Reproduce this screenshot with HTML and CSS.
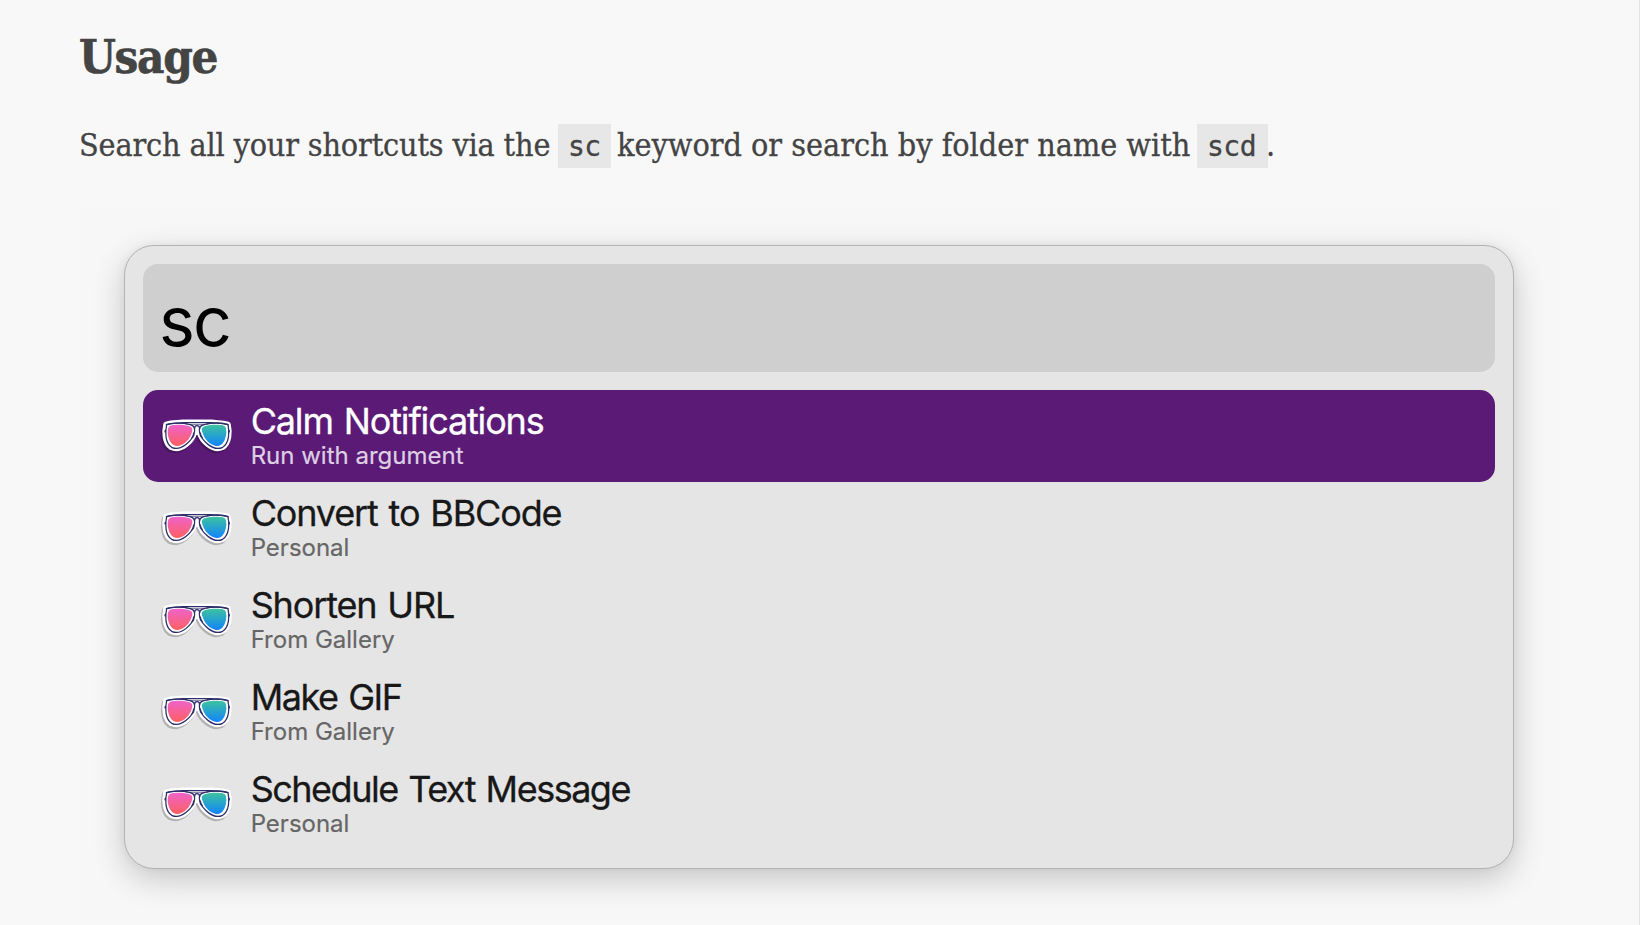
FILE: index.html
```html
<!DOCTYPE html>
<html lang="en">
<head>
<meta charset="utf-8">
<title>Usage</title>
<link rel="stylesheet" href="styles.css">
</head>
<body>
<svg class="defs" width="0" height="0" aria-hidden="true">
  <defs>
    <linearGradient id="pink" x1="0" y1="0" x2="0" y2="1"><stop offset="0" stop-color="#ee63c8"/><stop offset="1" stop-color="#ff5f62"/></linearGradient>
    <linearGradient id="blue" x1="0" y1="0" x2="0" y2="1"><stop offset="0" stop-color="#3cc2a0"/><stop offset="1" stop-color="#1283fb"/></linearGradient>
    <g id="sticker" stroke-width="19" stroke-linejoin="round">
      <path d="M49 83C44 105 45 137 64 150C94 164 126 129 132 107L141 101L150 107C156 129 189 164 217 150C237 137 238 105 233 83C216 78 198 80 183 77H99C84 80 68 77 49 83Z"/>
    </g>
    <symbol id="glasses" viewBox="27 60 221 114">
      <use href="#sticker" class="sticker-shadow" transform="translate(-4 6)"/>
      <use href="#sticker" fill="#fff" stroke="#fff"/>
      <g fill="none" stroke="#2c2d69" stroke-width="3.8" stroke-linecap="round" stroke-linejoin="round">
        <path d="M49 83C68 77 84 80 99 77H183C198 80 216 77 234 83"/>
        <path d="M104 80Q112 84 124 83H158Q172 84 179 80" stroke-width="2"/>
        <path d="M50 83C45 105 45 138 65 151C94 165 127 130 133 107C138 86 124 81 99 79C79 77 62 78 50 83Z"/>
        <path d="M234 83C239 105 238 138 218 151C189 165 155 130 149 107C144 86 158 81 183 79C203 77 221 78 234 83Z"/>
        <path d="M134 94Q134 86 141 86Q148 86 149 94"/>
        <path stroke-width="5" d="M131 109Q132 116 127 121M151 109Q150 116 156 121M46 101V104M237 101V104"/>
      </g>
      <path fill="url(#pink)" d="M60 87C75 82 99 83 116 87C128 90 129 97 125 108C120 126 104 143 85 147C67 150 54 128 53 107C53 97 55 89 60 87Z"/>
      <path fill="url(#blue)" d="M223 87C208 82 183 83 166 87C154 90 154 97 158 108C163 126 179 143 198 147C216 150 228 128 229 107C229 97 228 89 223 87Z"/>
    </symbol>
  </defs>
</svg>
<main class="page">
  <h2 class="heading">Usage</h2>
  <p class="intro"><span class="lead">Search all your shortcuts via the</span><code class="code">sc</code><span class="middle">keyword or search by folder name with</span><code class="code code-last">scd</code><span class="stop">.</span></p>
  <section class="shot">
    <div class="panel">
      <div class="search">sc</div>
      <ul class="results">
        <li class="row selected"><svg class="icon"><use href="#glasses"/></svg><div class="label"><span class="title">Calm Notifications</span><span class="sub">Run with argument</span></div></li>
        <li class="row"><svg class="icon"><use href="#glasses"/></svg><div class="label"><span class="title">Convert to BBCode</span><span class="sub">Personal</span></div></li>
        <li class="row"><svg class="icon"><use href="#glasses"/></svg><div class="label"><span class="title">Shorten URL</span><span class="sub">From Gallery</span></div></li>
        <li class="row"><svg class="icon"><use href="#glasses"/></svg><div class="label"><span class="title title-short">Make GIF</span><span class="sub">From Gallery</span></div></li>
        <li class="row"><svg class="icon"><use href="#glasses"/></svg><div class="label"><span class="title title-long">Schedule Text Message</span><span class="sub">Personal</span></div></li>
      </ul>
    </div>
  </section>
</main>
</body>
</html>
```
FILE: styles.css
```css
* { box-sizing: border-box; }
body { margin: 0; height: 925px; overflow: hidden; background: #f8f8f8; }
.defs { display: block; height: 0; }
.page {
  height: 925px;
  padding: 25px 80px 0 79px;
  border-right: 1px solid #e4e4e4;
  color: #444;
  font-family: "DejaVu Serif Condensed", "DejaVu Serif", serif;
  font-stretch: condensed;
}
.heading { margin: 0; height: 62px; font-size: 47px; line-height: 63px; font-weight: 700; letter-spacing: -1.3px; -webkit-text-stroke: .6px #444; }
.intro { display: flex; align-items: center; margin: 37px 0 40px; height: 44px; font-size: 32px; line-height: 42px; white-space: nowrap; -webkit-text-stroke: .3px #444; }
.lead { width: 479px; height: 44px; letter-spacing: -.15px; }
.code { height: 44px; width: 53px; padding-left: 10px; background: #e7e7e7; font: 28px/45px "DejaVu Sans Mono", monospace; letter-spacing: -0.5px; }
.middle { width: 586px; height: 44px; padding-left: 6px; }
.code-last { width: 71px; }
.stop { margin-left: -2px; height: 44px; }
.shot { height: 713px; padding: 37px 45px 0 45px; background: #f7f7f7; }
.panel {
  height: 624px;
  padding: 18px;
  border: 1px solid #b3b3b3;
  border-radius: 30px;
  background: #e5e5e5;
  box-shadow: 0 10px 32px rgba(0, 0, 0, .2), 0 0 8px rgba(0, 0, 0, .05);
  font-family: Inter, sans-serif;
  font-stretch: normal;
}
.search { height: 108px; padding: 19px 0 0 16px; border-radius: 15px; background: #cfcfcf; color: #000; font-size: 68px; line-height: 76px; letter-spacing: -2px; }
.results { margin: 18px 0 0; padding: 0; list-style: none; }
.row { display: flex; align-items: center; height: 92px; padding-left: 16px; border-radius: 15px; color: #181818; }
.selected { background: #5a1a76; color: #fff; }
.icon { width: 73.67px; height: 38px; flex: none; }
.sticker-shadow { fill: #000; stroke: #000; opacity: .22; }
.label { display: flex; flex-direction: column; padding: 0 0 0 18px; }
.title { font-size: 36px; line-height: 39px; letter-spacing: -1.15px; word-spacing: 2px; white-space: nowrap; -webkit-text-stroke: .3px currentColor; }
.title-short { letter-spacing: -1.45px; }
.title-long { letter-spacing: -1.5px; }
.sub { font-size: 24px; line-height: 29px; color: #666; white-space: nowrap; -webkit-text-stroke: .2px currentColor; }
.selected .sub { color: #decfe4; }
```
